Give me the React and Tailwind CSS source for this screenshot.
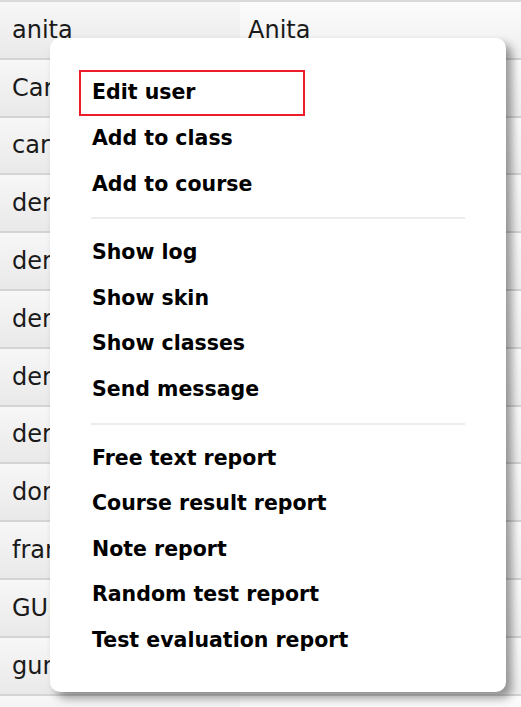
import React from 'react';

const rows = [
  ['anita', 'Anita'],
  ['Carina', 'Carina Berg'],
  ['carlos', 'Carlos'],
  ['demo1', 'Demo 1'],
  ['demo2', 'Demo 2'],
  ['demo3', 'Demo 3'],
  ['demo4', 'Demo 4'],
  ['demo5', 'Demo 5'],
  ['dorte', 'Dorte'],
  ['frank', 'Frank'],
  ['GUEST', 'Guest'],
  ['gunnar', 'Gunnar'],
  ['', ''],
];

const groups = [
  ['Edit user', 'Add to class', 'Add to course'],
  ['Show log', 'Show skin', 'Show classes', 'Send message'],
  ['Free text report', 'Course result report', 'Note report', 'Random test report', 'Test evaluation report'],
];

export default function App() {
  return (
    <div className="relative w-[521px] h-[707px] overflow-hidden bg-white font-['DejaVu_Sans',sans-serif]">
      {/* table behind */}
      <div className="border-t-2 border-[#d9d9d9]">
        {rows.map(([user, name], i) => (
          <div key={i} className="flex h-[57.8px] border-b-2 border-[#d4d4d4]">
            <div className="w-[240px] flex items-center pl-[12px] text-[24px] text-[#1a1a1a] bg-gradient-to-b from-[#f7f7f7] to-[#e9e9e9]">
              {user}
            </div>
            <div className="flex-1 flex items-center pl-[8px] text-[24px] text-[#1a1a1a] bg-gradient-to-b from-[#fcfcfc] to-[#efefef]">
              {name}
            </div>
          </div>
        ))}
      </div>

      {/* context menu */}
      <div className="absolute left-[50px] top-[38px] w-[456px] h-[654px] bg-white rounded-[10px] shadow-[6px_6px_10px_rgba(0,0,0,0.4)] pt-[32px] pl-[29px]">
        {groups.map((items, gi) => (
          <div key={gi}>
            {gi > 0 && <div className="ml-[12px] w-[374px] h-[2px] bg-[#ececec] my-[10.5px]" />}
            {items.map((label, i) => (
              <div
                key={label}
                className={`h-[45.6px] flex items-center px-[11px] border-2 text-[20.5px] font-bold text-black ${
                  gi === 0 && i === 0 ? 'w-[226px] border-[#ec1c2a]' : 'border-transparent'
                }`}
              >
                {label}
              </div>
            ))}
          </div>
        ))}
      </div>
    </div>
  );
}
